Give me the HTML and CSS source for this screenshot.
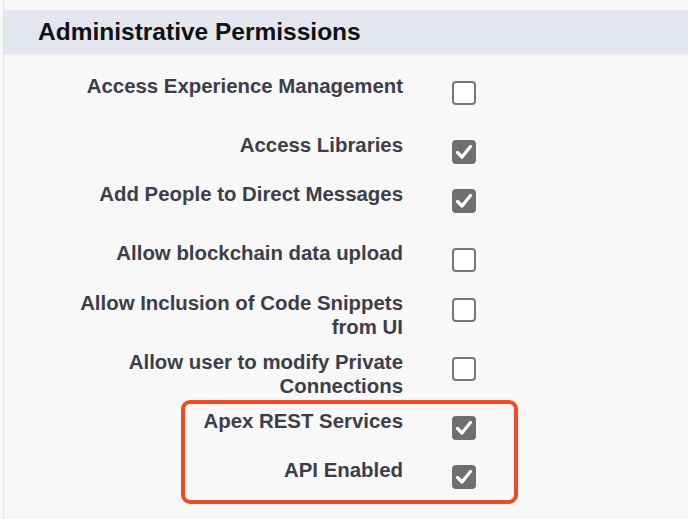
FILE: index.html
```html
<!DOCTYPE html>
<html>
<head>
<meta charset="utf-8">
<link rel="stylesheet" href="styles.css">
</head>
<body>
<div class="page">
  <div class="section-head">Administrative Permissions</div>
  <div class="list">
    <div class="row h59"><div class="label">Access Experience Management</div><span class="box"></span></div>
    <div class="row h49"><div class="label">Access Libraries</div><span class="box on"><svg viewBox="0 0 24 24"><path d="M5.5 12.5 L10 17 L18.5 6.5"/></svg></span></div>
    <div class="row h59"><div class="label">Add People to Direct Messages</div><span class="box on"><svg viewBox="0 0 24 24"><path d="M5.5 12.5 L10 17 L18.5 6.5"/></svg></span></div>
    <div class="row h50"><div class="label">Allow blockchain data upload</div><span class="box"></span></div>
    <div class="row h59"><div class="label">Allow Inclusion of Code Snippets from UI</div><span class="box"></span></div>
    <div class="row h59"><div class="label">Allow user to modify Private Connections</div><span class="box"></span></div>
    <div class="row h49"><div class="label">Apex REST Services</div><span class="box on"><svg viewBox="0 0 24 24"><path d="M5.5 12.5 L10 17 L18.5 6.5"/></svg></span></div>
    <div class="row h49"><div class="label">API Enabled</div><span class="box on"><svg viewBox="0 0 24 24"><path d="M5.5 12.5 L10 17 L18.5 6.5"/></svg></span></div>
    <div class="highlight"></div>
  </div>
</div>
</body>
</html>
```
FILE: styles.css
```css
html, body {
  margin: 0;
  padding: 0;
  background: #f8f8f8;
  width: 688px;
  height: 519px;
  overflow: hidden;
}
.page {
  margin-left: 3px;
  border-left: 1px solid #e2e2e2;
  height: 519px;
  padding-top: 10px;
  box-sizing: border-box;
  font-family: "Liberation Sans", Arial, sans-serif;
}
.section-head {
  background: #e4e7ef;
  height: 44px;
  padding-left: 34px;
  font-size: 24.5px;
  font-weight: bold;
  color: #111;
  line-height: 44px;
  border-bottom: 1px solid #eceef3;
}
.list {
  position: relative;
  padding-top: 19px;
}
.row {
  display: flex;
  align-items: flex-start;
}
.h59 { height: 59px; }
.h50 { height: 50px; }
.h49 { height: 49px; }
.label {
  width: 340px;
  margin-left: 59px;
  text-align: right;
  font-size: 20.4px;
  font-weight: bold;
  line-height: 24px;
  color: #3d3e4b;
}
.box {
  margin-left: 49px;
  margin-top: 7px;
  width: 24px;
  height: 24px;
  box-sizing: border-box;
  border: 2px solid #767676;
  border-radius: 4px;
  background: #fff;
  display: flex;
  align-items: center;
  justify-content: center;
}
.box.on {
  background: #6f6f6f;
  border-color: #6f6f6f;
}
.box svg {
  width: 24px;
  height: 24px;
  flex: none;
}
.box svg path {
  fill: none;
  stroke: #fff;
  stroke-width: 3.2;
  stroke-linecap: round;
  stroke-linejoin: round;
}
.highlight {
  position: absolute;
  left: 177px;
  top: 345px;
  width: 337px;
  height: 104px;
  box-sizing: border-box;
  border: 4px solid #f04a23;
  border-radius: 9px;
}
```
